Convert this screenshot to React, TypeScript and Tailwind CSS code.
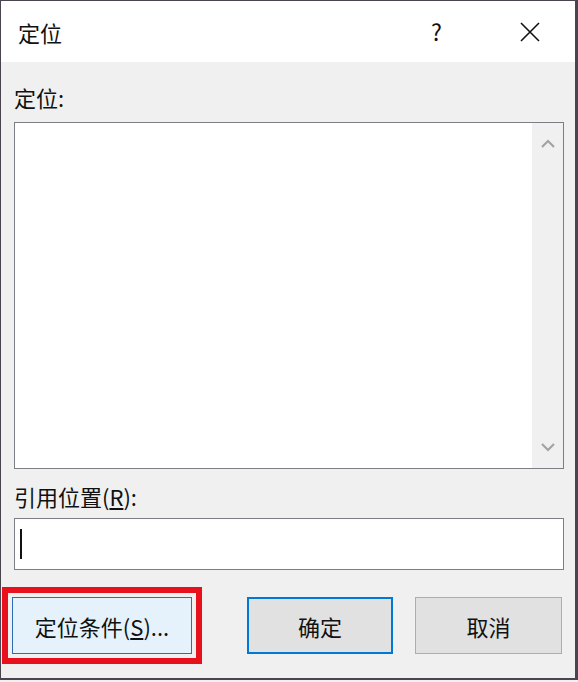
import React from "react";

const font = { fontFamily: '"Noto Sans CJK SC", "Noto Sans", sans-serif' };

function Chevron({ down = false }: { down?: boolean }) {
  return (
    <svg width="16" height="10" viewBox="0 0 16 10" className="block">
      <path
        d={down ? "M2 2 L8 8 L14 2" : "M2 8 L8 2 L14 8"}
        fill="none"
        stroke="#a3a3a3"
        strokeWidth="2.2"
      />
    </svg>
  );
}

export default function App() {
  return (
    <div className="w-[578px] h-[682px] bg-[#f0f0f0]" style={font}>
      <div className="flex h-[680px] flex-col border-t border-l border-r-[3px] border-b-2 border-[#4a4450] bg-[#f0f0f0]">
        {/* title bar */}
        <div className="flex h-[61px] shrink-0 items-center bg-white text-[22px] text-[#111]">
          <span className="ml-[17px] leading-none">定位</span>
          <span className="ml-auto mr-[78px] text-[23px] leading-none">?</span>
          <svg width="20" height="20" viewBox="0 0 20 20" className="mr-[35px]">
            <path d="M1 1 L19 19 M19 1 L1 19" stroke="#111" strokeWidth="1.6" />
          </svg>
        </div>

        <div className="flex flex-col pl-[13px] pr-[11px] text-[22px] text-[#111]">
          <div className="mt-[20px] h-[30px] leading-[30px]">定位:</div>

          <div className="mt-[10px] flex h-[347px] border border-[#7d7d85] bg-white">
            <div className="flex-1" />
            <div className="flex w-[31px] flex-col items-center justify-between bg-[#f0f0f0] pt-[16px] pb-[16px]">
              <Chevron />
              <Chevron down />
            </div>
          </div>

          <div className="mt-[12px] h-[30px] leading-[30px]">
            引用位置(<span className="underline underline-offset-2">R</span>):
          </div>

          <div className="mt-[7px] flex h-[52px] items-center border border-[#7d7d85] bg-white px-[5px]">
            <div className="h-[30px] w-[2px] bg-[#111]" />
          </div>

          <div className="mt-[17px] flex items-center text-[22px]">
            <div className="-ml-[12px] border-[6px] border-[#e8101c] p-[4px]">
              <button className="flex h-[57px] w-[180px] items-center justify-center border border-[#2b6cb8] bg-[#e5f1fb] leading-none text-[#111]">
                定位条件(<span className="underline underline-offset-2">S</span>)...
              </button>
            </div>
            <button className="ml-[45px] flex h-[57px] w-[146px] items-center justify-center border-2 border-[#0078d7] bg-[#e1e1e1] leading-none text-[#111]">
              确定
            </button>
            <button className="ml-[22px] flex h-[57px] w-[147px] items-center justify-center border border-[#adadad] bg-[#e1e1e1] leading-none text-[#111]">
              取消
            </button>
          </div>
        </div>
      </div>
    </div>
  );
}
